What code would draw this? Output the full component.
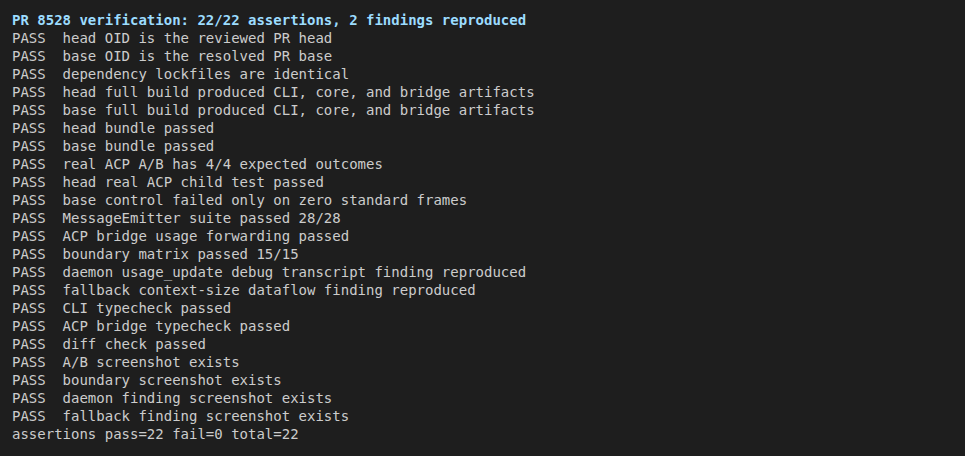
const checks = [
  "head OID is the reviewed PR head",
  "base OID is the resolved PR base",
  "dependency lockfiles are identical",
  "head full build produced CLI, core, and bridge artifacts",
  "base full build produced CLI, core, and bridge artifacts",
  "head bundle passed",
  "base bundle passed",
  "real ACP A/B has 4/4 expected outcomes",
  "head real ACP child test passed",
  "base control failed only on zero standard frames",
  "MessageEmitter suite passed 28/28",
  "ACP bridge usage forwarding passed",
  "boundary matrix passed 15/15",
  "daemon usage_update debug transcript finding reproduced",
  "fallback context-size dataflow finding reproduced",
  "CLI typecheck passed",
  "ACP bridge typecheck passed",
  "diff check passed",
  "A/B screenshot exists",
  "boundary screenshot exists",
  "daemon finding screenshot exists",
  "fallback finding screenshot exists",
];

export default function App() {
  return (
    <div className="w-[965px] h-[456px] bg-[#1e1e1e] text-[#cccccc] font-['DejaVu_Sans_Mono',monospace] text-[14px] leading-[18px] pt-[11px] px-[12px] whitespace-pre overflow-hidden">
      <div className="font-bold text-[#9cdcfe]">
        PR 8528 verification: 22/22 assertions, 2 findings reproduced
      </div>
      {checks.map((c) => (
        <div key={c}>{"PASS  " + c}</div>
      ))}
      <div>assertions pass=22 fail=0 total=22</div>
    </div>
  );
}
